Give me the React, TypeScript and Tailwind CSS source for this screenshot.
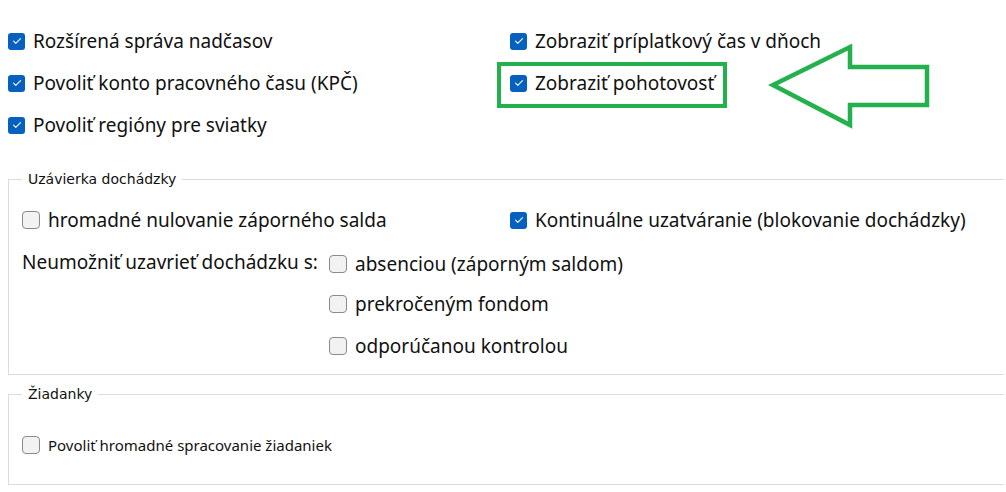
import React from "react";

const main = { fontFamily: '"Noto Sans", "Open Sans", sans-serif' };
const legendFont = { fontFamily: '"DejaVu Sans", Verdana, sans-serif' };

function Box({ checked }: { checked?: boolean }) {
  if (checked) {
    return (
      <span className="flex h-[17px] w-[17px] shrink-0 items-center justify-center rounded-[3px] bg-[#0560c0]">
        <svg width="10" height="8" viewBox="0 0 10 8" fill="none">
          <path d="M1.5 4.2 L3.8 6.3 L8.5 1.6" stroke="white" strokeWidth="1.1" strokeLinecap="round" strokeLinejoin="round" />
        </svg>
      </span>
    );
  }
  return <span className="block h-[18px] w-[18px] shrink-0 rounded-[4px] border border-[#8a8a8a] bg-[#f2f2f2]" />;
}

function Item({ checked, label, big = true }: { checked?: boolean; label: string; big?: boolean }) {
  return (
    <div className="flex items-center gap-[8px]">
      <Box checked={checked} />
      <span className={big ? "text-[19px] leading-[24px] text-[#111]" : "text-[15px] leading-[20px] text-[#111]"}>{label}</span>
    </div>
  );
}

export default function App() {
  return (
    <div className="relative h-[492px] w-[1006px] overflow-hidden bg-white" style={main}>
      {/* top options */}
      <div className="grid grid-cols-[502px_1fr] pl-[8px] pt-[20px]">
        <div className="flex flex-col">
          <div className="flex h-[42px] items-center"><Item checked label="Rozšírená správa nadčasov" /></div>
          <div className="flex h-[42px] items-center"><Item checked label="Povoliť konto pracovného času (KPČ)" /></div>
          <div className="flex h-[42px] items-center"><Item checked label="Povoliť regióny pre sviatky" /></div>
        </div>
        <div className="flex flex-col">
          <div className="flex h-[42px] items-center"><Item checked label="Zobraziť príplatkový čas v dňoch" /></div>
          <div className="relative flex h-[42px] items-center">
            <Item checked label="Zobraziť pohotovosť" />
            <div className="pointer-events-none absolute left-[-13px] top-[0px] h-[46px] w-[230px] border-[4px] border-[#22b14c]" />
          </div>
        </div>
      </div>

      {/* arrow */}
      <svg className="absolute left-[760px] top-[35px]" width="180" height="100" viewBox="0 0 180 100" fill="none">
        <polygon points="13,50 90,12 90,32 167,32 167,70 90,70 90,90" stroke="#22b14c" strokeWidth="4.5" strokeLinejoin="miter" />
      </svg>

      {/* Uzávierka dochádzky */}
      <fieldset className="ml-[8px] mt-[25px] w-[996px] border border-r-0 border-[#dcdcdc] pb-[7px] pl-[13px]">
        <legend className="px-[6px] text-[14px] leading-[17px] text-[#111]" style={legendFont}>Uzávierka dochádzky</legend>
        <div className="grid grid-cols-[488px_1fr] pt-[11px]">
          <div className="flex h-[42px] items-center"><Item label="hromadné nulovanie záporného salda" /></div>
          <div className="flex h-[42px] items-center"><Item checked label="Kontinuálne uzatváranie (blokovanie dochádzky)" /></div>
        </div>
        <div className="flex">
          <div className="flex h-[42px] w-[307px] items-center text-[19px] leading-[24px] text-[#111]">Neumožniť uzavrieť dochádzku s:</div>
          <div className="flex flex-col">
            <div className="flex h-[42px] items-center pt-[3px]"><Item label="absenciou (záporným saldom)" /></div>
            <div className="flex h-[42px] items-center"><Item label="prekročeným fondom" /></div>
            <div className="flex h-[42px] items-center"><Item label="odporúčanou kontrolou" /></div>
          </div>
        </div>
      </fieldset>

      {/* Žiadanky */}
      <fieldset className="ml-[8px] mt-[11px] w-[996px] border border-r-0 border-[#dcdcdc] pb-[29px] pl-[13px]">
        <legend className="px-[6px] text-[14px] leading-[17px] text-[#111]" style={legendFont}>Žiadanky</legend>
        <div className="pt-[32px]">
          <Item label="Povoliť hromadné spracovanie žiadaniek" big={false} />
        </div>
      </fieldset>
    </div>
  );
}
